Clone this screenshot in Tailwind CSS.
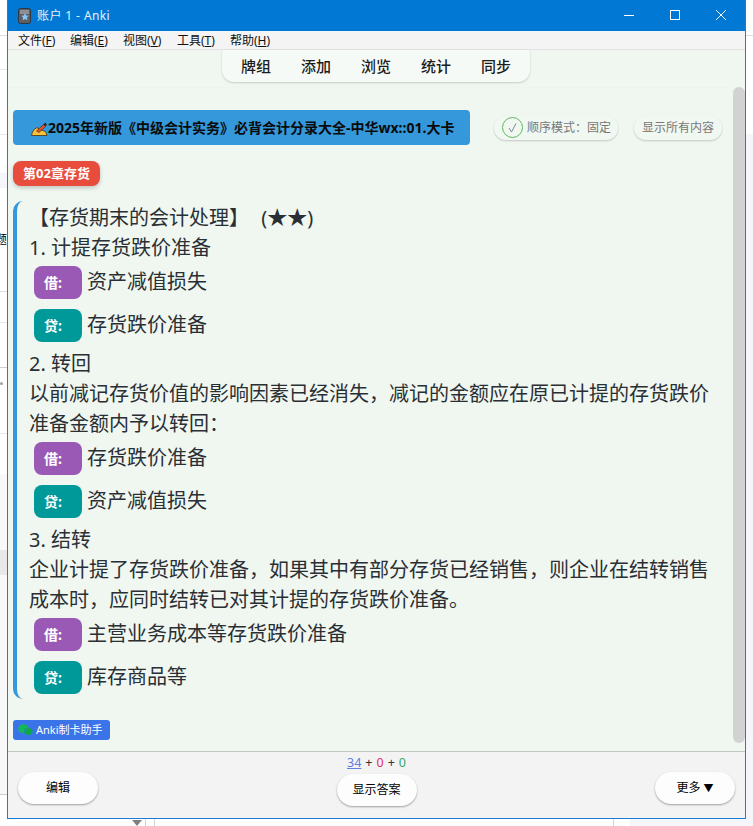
<!DOCTYPE html>
<html lang="zh">
<head>
    <meta charset="UTF-8">
    <meta name="viewport" content="width=device-width, initial-scale=1.0">
    <title>Anki</title>
    <script src="https://cdn.jsdelivr.net/npm/@tailwindcss/browser@4"></script>
</head>
<body class="bg-white font-['Noto_Sans','Noto_Sans_CJK_SC',sans-serif]">
<div class="relative w-[753px] h-[826px] overflow-hidden bg-white">
    <!-- desktop behind the window -->
    <div class="absolute left-0 top-[35px] w-[7px] h-px bg-[#dcdcdc]"></div>
    <div class="absolute left-0 top-[69px] w-[7px] h-px bg-[#e6e6e6]"></div>
    <div class="absolute left-0 top-[134px] w-[7px] h-px bg-[#e6e6e6]"></div>
    <div class="absolute left-0 top-[173px] w-[7px] h-[15px] bg-[#f4f6fb]"></div>
    <div class="absolute left-0 top-[233px] w-[7px] flex justify-end overflow-hidden text-[12px] leading-[14px] text-black whitespace-nowrap"><span class="shrink-0">题</span></div>
    <div class="absolute left-0 top-[291px] w-[7px] h-px bg-[#dcdcdc]"></div>
    <div class="absolute left-0 top-[322px] w-[7px] h-px bg-[#e6e6e6]"></div>
    <div class="absolute left-0 top-[367px] w-[7px] h-px bg-[#cfcfcf]"></div>
    <div class="absolute left-0 top-[382px] w-[3px] h-[3px] rounded-full bg-[#a0a0a0]"></div>
    <div class="absolute left-0 top-[433px] w-[7px] h-px bg-[#e6e6e6]"></div>
    <div class="absolute left-0 top-[474px] w-[7px] h-[320px] bg-[#f8f8f8]"></div>
    <div class="absolute left-0 top-[550px] w-[7px] h-[25px] bg-[#e8e8e8]"></div>
    <div class="absolute left-0 top-[794px] w-[7px] h-px bg-[#cccccc]"></div>
    <div class="absolute left-[746px] top-[35px] w-[7px] h-px bg-[#dcdcdc]"></div>
    <div class="absolute left-[746px] top-[134px] w-[7px] h-[692px] bg-[#f5f6fb]"></div>
    <div class="absolute left-[630px] top-[819px] w-[123px] h-[7px] bg-[#f5f6fb]"></div>
    <div class="absolute left-[145px] top-[819px] w-px h-[7px] bg-[#d4d4d4]"></div>
    <div class="absolute left-[154px] top-[819px] w-px h-[7px] bg-[#d4d4d4]"></div>
    <div class="absolute left-[613px] top-[819px] w-px h-[7px] bg-[#d4d4d4]"></div>
    <div class="absolute left-[132px] top-[820px] w-0 h-0 border-x-[5px] border-x-transparent border-t-[6px] border-t-[#808080]"></div>

    <!-- Anki window -->
    <div class="absolute left-[7px] top-0 w-[739px] h-[819px] flex flex-col border border-t-0 border-[#1a7fd4] bg-[#f3f3f3]">
        <!-- title bar -->
        <div class="h-[31px] shrink-0 flex items-center bg-[#0078d4] text-white">
            <svg class="ml-[10px] w-[13px] h-[16px]" viewBox="0 0 13 16">
                <rect x="0.5" y="0.5" width="12" height="15" rx="2" fill="#5b5f66" stroke="#33363b"/>
                <rect x="2" y="2" width="9" height="4" fill="#8a8f96"/>
                <path d="M7 5l1.2 2.4 2.6.4-1.9 1.8.5 2.6L7 11.1 4.600 12.200l.5-2.600L3.200 7.800l2.600-.4z" fill="#8fc4f2"/>
            </svg>
            <span class="ml-[6px] text-[12px] tracking-[0.4px] text-[#e6f1fb]">账户 1 - Anki</span>
            <div class="ml-auto flex items-center">
                <svg class="w-[46px] h-[31px]" viewBox="0 0 46 31"><path d="M18 15.500h10" stroke="#fff" fill="none"/></svg>
                <svg class="w-[46px] h-[31px]" viewBox="0 0 46 31"><rect x="18.500" y="10.500" width="9" height="9" stroke="#fff" fill="none"/></svg>
                <svg class="w-[46px] h-[31px] mr-[1px]" viewBox="0 0 46 31"><path d="M18 10l10 10M28 10l-10 10" stroke="#fff" fill="none"/></svg>
            </div>
        </div>
        <!-- menu bar -->
        <div class="h-[19px] shrink-0 flex items-center pl-[10px] pt-[2px] bg-[#f4f4f4] border-b border-[#e2e2e2] text-[12px] leading-none text-[#111]">
            <span class="w-[52px]">文件(<u>F</u>)</span>
            <span class="w-[53px]">编辑(<u>E</u>)</span>
            <span class="w-[54px]">视图(<u>V</u>)</span>
            <span class="w-[53px]">工具(<u>T</u>)</span>
            <span>帮助(<u>H</u>)</span>
        </div>

        <!-- main area -->
        <div class="relative flex-1 min-h-0 bg-[#f0f7f0] pl-[5px] border-b border-[#c4c4c4]">
            <!-- top nav -->
            <div class="absolute left-[214px] top-0 flex w-[308px] h-[32px] px-[4px] items-center bg-[#f6faf6] rounded-b-[12px] shadow-[0_1px_2px_rgba(0,0,0,0.18)] text-[15px] font-medium text-[#1c1c1c]">
                <span class="w-[60px] text-center">牌组</span>
                <span class="w-[60px] text-center">添加</span>
                <span class="w-[60px] text-center">浏览</span>
                <span class="w-[60px] text-center">统计</span>
                <span class="w-[60px] text-center">同步</span>
            </div>
            <!-- scrollbar -->
            <div class="absolute right-0 top-[37px] w-[12px] h-[656px] rounded-[6px] bg-[#d2d2d2]"></div>
            <div class="absolute left-0 top-[37px] right-[12px] h-px bg-[#edf4ed]"></div>

            <!-- deck row -->
            <div class="pt-[60px] flex items-center">
                <div class="w-[457px] h-[35px] flex items-center pl-[18px] rounded-[4px] bg-[#3498db] text-[14px] font-bold text-[#0a0a0a] whitespace-nowrap">
                    <svg class="w-[17px] h-[16px] shrink-0" viewBox="0 0 17 16">
                        <path d="M0.500 15.500C1 12 3 9 6 7.500l3 2.500c2 0 5 1 6 2.500l1 3z" fill="#f8c23a" stroke="#4a3208" stroke-width="0.8"/>
                        <path d="M5.500 11L12.500 4.500l2 2L8 12.500z" fill="#e2502e" stroke="#4a1a08" stroke-width="0.6"/>
                        <path d="M12.500 4.500l1.500-2 2 2-1.500 2z" fill="#2a2a2a"/>
                    </svg>
                    <span>2025年新版《中级会计实务》必背会计分录大全-中华wx::01.大卡</span>
                </div>
                <div class="ml-[24px] w-[124px] h-[24px] flex items-center pl-[8px] rounded-full bg-[#f1f7f1] shadow-[0_1px_2px_rgba(0,0,0,0.2)] text-[12px] text-[#777]">
                    <svg class="w-[21px] h-[21px] shrink-0" viewBox="0 0 21 21">
                        <circle cx="10.500" cy="10.500" r="10" fill="none" stroke="#5cb85c"/>
                        <path d="M7 11l2.500 4L14 6.500" fill="none" stroke="#7d8a99"/>
                    </svg>
                    <span class="ml-[4px] whitespace-nowrap">顺序模式：固定</span>
                </div>
                <div class="ml-[16px] w-[88px] h-[24px] flex items-center justify-center rounded-full bg-[#f1f7f1] shadow-[0_1px_2px_rgba(0,0,0,0.2)] text-[12px] text-[#777] whitespace-nowrap">显示所有内容</div>
            </div>

            <!-- chapter tag -->
            <div class="mt-[16px] w-[87px] h-[25px] flex items-center justify-center rounded-[8px] bg-[#e74c3c] shadow-[0_2px_4px_rgba(0,0,0,0.2)] text-[13px] font-bold text-white whitespace-nowrap">第02章存货</div>

            <!-- card body -->
            <div class="mt-[15px] w-[708px] pl-[12px] pt-[2px] pb-[5px] border-l-4 border-[#3498db] rounded-l-[10px] text-[20px] leading-[30px] text-[#2a2f35]">
                <div>【存货期末的会计处理】 <span class="ml-[7px]">(★★)</span></div>
                <div>1. 计提存货跌价准备</div>
                <div class="flex flex-col gap-[10px] pt-[3px] pb-[7px] pl-[5px]">
                    <div class="flex h-[33px] items-start leading-[31px]"><span class="w-[48px] h-[33px] flex items-center pl-[10px] mr-[5px] rounded-[8px] bg-[#9b59b6] text-[14px] font-bold text-white">借:</span>资产减值损失</div>
                    <div class="flex h-[33px] items-start leading-[31px]"><span class="w-[48px] h-[33px] flex items-center pl-[10px] mr-[5px] rounded-[8px] bg-[#009999] text-[14px] font-bold text-white">贷:</span>存货跌价准备</div>
                </div>
                <div>2. 转回</div>
                <div>以前减记存货价值的影响因素已经消失，减记的金额应在原已计提的存货跌价准备金额内予以转回：</div>
                <div class="flex flex-col gap-[10px] pt-[3px] pb-[7px] pl-[5px]">
                    <div class="flex h-[33px] items-start leading-[31px]"><span class="w-[48px] h-[33px] flex items-center pl-[10px] mr-[5px] rounded-[8px] bg-[#9b59b6] text-[14px] font-bold text-white">借:</span>存货跌价准备</div>
                    <div class="flex h-[33px] items-start leading-[31px]"><span class="w-[48px] h-[33px] flex items-center pl-[10px] mr-[5px] rounded-[8px] bg-[#009999] text-[14px] font-bold text-white">贷:</span>资产减值损失</div>
                </div>
                <div>3. 结转</div>
                <div>企业计提了存货跌价准备，如果其中有部分存货已经销售，则企业在结转销售成本时，应同时结转已对其计提的存货跌价准备。</div>
                <div class="flex flex-col gap-[10px] pt-[3px] pl-[5px]">
                    <div class="flex h-[33px] items-start leading-[31px]"><span class="w-[48px] h-[33px] flex items-center pl-[10px] mr-[5px] rounded-[8px] bg-[#9b59b6] text-[14px] font-bold text-white">借:</span>主营业务成本等存货跌价准备</div>
                    <div class="flex h-[33px] items-start leading-[31px]"><span class="w-[48px] h-[33px] flex items-center pl-[10px] mr-[5px] rounded-[8px] bg-[#009999] text-[14px] font-bold text-white">贷:</span>库存商品等</div>
                </div>
            </div>

            <!-- helper badge -->
            <div class="mt-[21px] w-[97px] h-[20px] flex items-center pl-[5px] rounded-[3px] bg-[#3b74e8] text-[11px] text-white whitespace-nowrap">
                <svg class="w-[15px] h-[12px] shrink-0" viewBox="0 0 15 12">
                    <ellipse cx="5.500" cy="4.800" rx="5.200" ry="4.500" fill="#12b85a"/>
                    <ellipse cx="10.500" cy="7.500" rx="4.300" ry="3.700" fill="#0fa54f" stroke="#3b74e8" stroke-width="0.5"/>
                </svg>
                <span class="ml-[3px]">Anki制卡助手</span>
            </div>
        </div>

        <!-- bottom bar -->
        <div class="relative h-[66px] shrink-0 grid grid-cols-3 items-start px-[10px] bg-[#f3f3f3] text-[12px] text-black">
            <button class="mt-[20px] w-[80px] h-[32px] rounded-[16px] bg-[#fdfdfd] shadow-[0_1px_2px_rgba(0,0,0,0.35)] justify-self-start">编辑</button>
            <div class="flex flex-col items-center">
                <div class="h-[22px] pt-[1px] flex items-center text-[12.5px] leading-none text-[#333]">
                    <u class="text-[#5c7fe0]">34</u><span class="mx-[4px]">+</span><span class="text-[#e0306a]">0</span><span class="mx-[4px]">+</span><span class="text-[#3aa76d]">0</span>
                </div>
                <button class="w-[80px] h-[32px] rounded-[16px] bg-[#fdfdfd] shadow-[0_1px_2px_rgba(0,0,0,0.35)]">显示答案</button>
            </div>
            <button class="mt-[20px] w-[80px] h-[32px] rounded-[16px] bg-[#fdfdfd] shadow-[0_1px_2px_rgba(0,0,0,0.35)] justify-self-end">更多 <span class="text-[10px]">▼</span></button>
        </div>
    </div>
</div>
</body>
</html>
